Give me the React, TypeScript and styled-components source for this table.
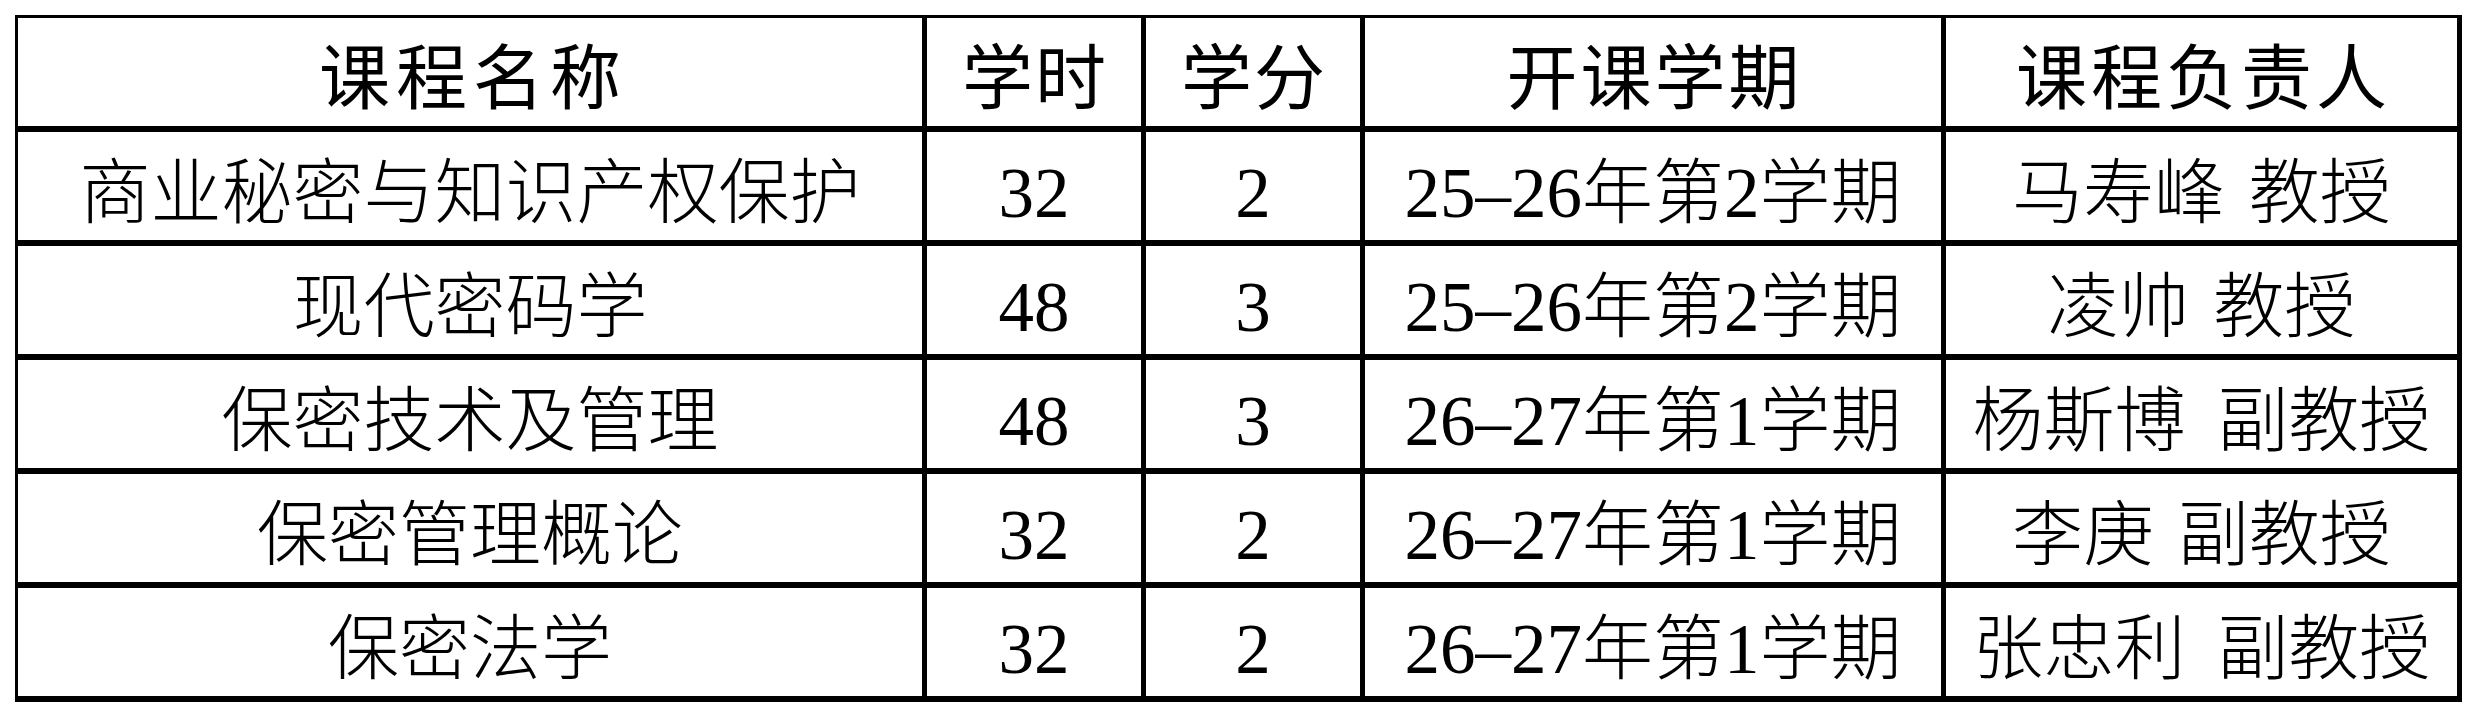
import React from "react";
import styled, { createGlobalStyle } from "styled-components";

const GlobalStyle = createGlobalStyle`
  html, body {
    margin: 0;
    padding: 0;
    background: #ffffff;
  }
  body {
    font-family: "Liberation Serif", "Noto Sans CJK SC", serif;
    color: #000000;
  }
`;

const headers = [
  { text: "课程名称", spacing: 6 },
  { text: "学时", spacing: 2 },
  { text: "学分", spacing: 2 },
  { text: "开课学期", spacing: 3 },
  { text: "课程负责人", spacing: 4 },
];

const courses = [
  ["商业秘密与知识产权保护", "32", "2", "25–26年第2学期", "马寿峰 教授"],
  ["现代密码学", "48", "3", "25–26年第2学期", "凌帅 教授"],
  ["保密技术及管理", "48", "3", "26–27年第1学期", "杨斯博 副教授"],
  ["保密管理概论", "32", "2", "26–27年第1学期", "李庚 副教授"],
  ["保密法学", "32", "2", "26–27年第1学期", "张忠利 副教授"],
];

export default function App() {
  return (
    <>
      <GlobalStyle />
      <Page>
        <Table>
          {headers.map((h) => (
            <HeadCell key={h.text} $spacing={h.spacing}>
              {h.text}
            </HeadCell>
          ))}
          {courses.map((row) =>
            row.map((cell, i) => (
              <Cell key={row[0] + i} $gap={i === 4 ? (cell.length > 6 ? 14 : 6) : 0}>
                {cell}
              </Cell>
            ))
          )}
        </Table>
      </Page>
    </>
  );
}

const Page = styled.div`
  padding: 15px 0 0 15px;
`;

const Table = styled.div`
  display: grid;
  grid-template-columns: 909px 219px 219px 581px 516px;
  grid-auto-rows: 114px;
  width: max-content;
  border-top: 3px solid #000;
  border-left: 3px solid #000;
`;

const Cell = styled.div<{ $gap?: number }>`
  box-sizing: border-box;
  display: flex;
  align-items: center;
  justify-content: center;
  padding-top: 14px;
  border-right: 5px solid #000;
  border-bottom: 6px solid #000;
  font-family: "Liberation Serif", "Noto Sans CJK SC", serif;
  font-size: 71px;
  font-weight: 300;
  line-height: 1;
  white-space: pre;
  word-spacing: ${(p) => p.$gap ?? 0}px;
`;

const HeadCell = styled(Cell)<{ $spacing: number }>`
  font-weight: 400;
  letter-spacing: ${(p) => p.$spacing}px;
  padding-left: ${(p) => p.$spacing}px;
`;
